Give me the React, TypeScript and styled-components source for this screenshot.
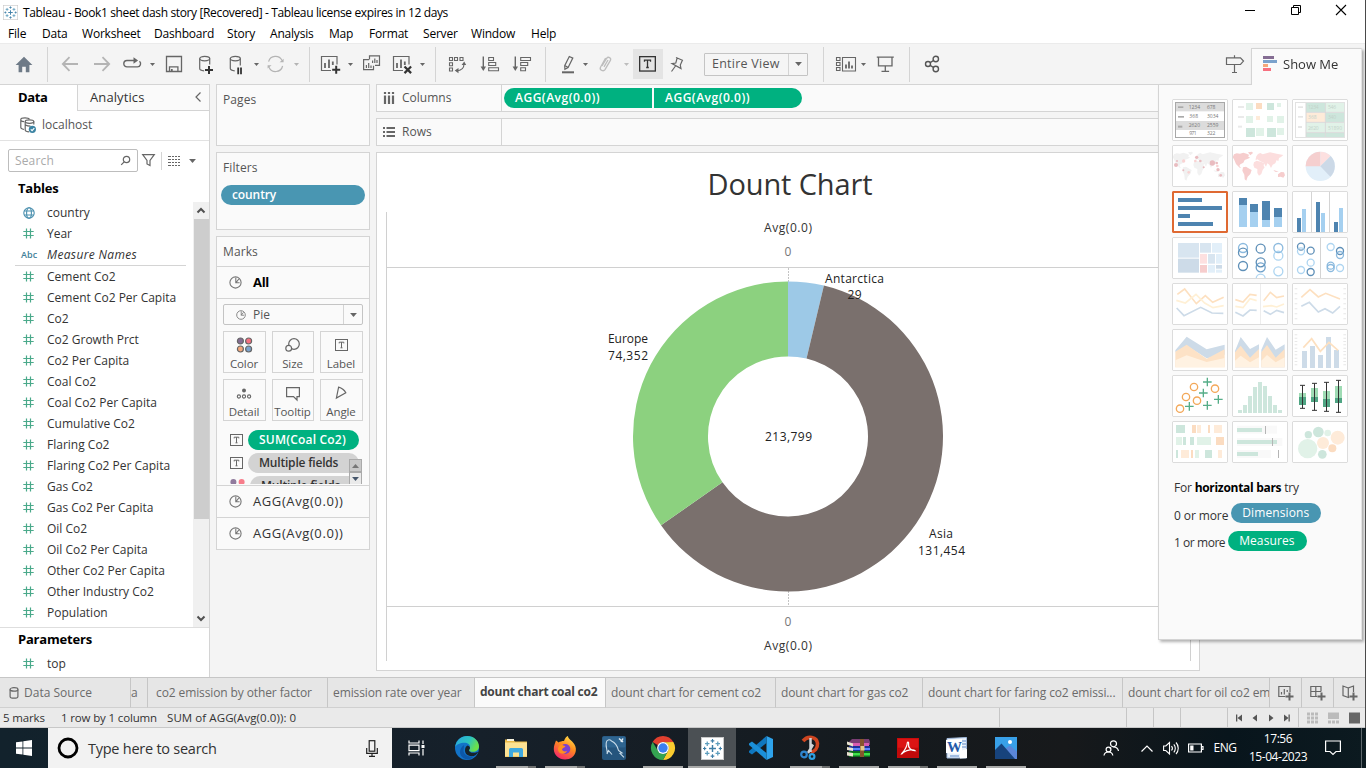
import React from "react";
import styled, { createGlobalStyle, css } from "styled-components";

const GREEN = "#00b180";
const BLUE = "#4996b2";
const LINE = "#d4d4d4";
const INK = "#666666";

const GlobalStyle = createGlobalStyle`
  * { box-sizing: border-box; }
  body { margin: 0; overflow: hidden; background: #f4f4f4; }
  svg { display: block; overflow: visible; flex: none; }
`;

const Screen = styled.div`
  position: relative;
  width: 1366px;
  height: 768px;
  display: flex;
  flex-direction: column;
  overflow: hidden;
  background: #f4f4f4;
  font-family: "Open Sans", "Noto Sans", sans-serif;
  font-size: 12px;
  color: #333;
  white-space: nowrap;
`;

const WindowEdge = styled.div`
  position: absolute;
  right: 0;
  top: 0;
  width: 1px;
  height: 728px;
  background: #4a4a4a;
`;

/* ---------- title and menu ---------- */

const TitleBar = styled.header`
  height: 24px;
  background: #fff;
  display: flex;
  align-items: center;
  padding: 0 16px 0 3px;
  color: #000;
`;
const TitleText = styled.span`
  margin-left: 5px;
  flex: 1;
  letter-spacing: -0.36px;
`;
const WindowButtons = styled.div`
  display: flex;
  width: 106px;
  padding-bottom: 4px;
  justify-content: space-between;
  align-items: center;
`;
const MenuBar = styled.nav`
  height: 19px;
  padding-left: 8px;
  background: #fff;
  display: flex;
  align-items: center;
  color: #000;
  letter-spacing: -0.2px;
`;
const MenuItem = styled.span<{ $w: number }>`
  flex: 0 0 ${(p) => p.$w}px;
`;

/* ---------- toolbar ---------- */

const Toolbar = styled.div`
  height: 41px;
  border-top: 1px solid #ebebeb;
  background: #f4f4f4;
  display: flex;
  align-items: center;
`;
const Slot = styled.div<{ $gap: number }>`
  margin-left: ${(p) => p.$gap}px;
  flex: none;
`;
const ToolSeparator = styled.div<{ $gap: number }>`
  margin-left: ${(p) => p.$gap}px;
  flex: none;
  width: 1px;
  height: 35px;
  background: ${LINE};
`;
const LabelToggle = styled.div`
  margin-left: 4px;
  width: 30px;
  height: 30px;
  background: #e4e4e4;
  display: flex;
  align-items: center;
  justify-content: center;
  padding-right: 1px;
`;
const FitSelect = styled.div`
  margin-left: 16px;
  width: 104px;
  height: 23px;
  border: 1px solid #c4c4c4;
  border-radius: 1px;
  background: #f5f5f5;
  display: flex;
  color: #555;
  font-size: 12.5px;
  line-height: 20px;
  padding-left: 7px;
  letter-spacing: 0.25px;
`;
const SelectArrow = styled.div<{ $w: number }>`
  margin-left: auto;
  width: ${(p) => p.$w}px;
  align-self: stretch;
  border-left: 1px solid ${LINE};
  display: flex;
  align-items: center;
  justify-content: center;
`;

/* ---------- body ---------- */

const Body = styled.main`
  height: 593px;
  display: flex;
`;
const DataPane = styled.aside`
  width: 210px;
  background: #fff;
  border-right: 1px solid ${LINE};
  border-top: 1px solid ${LINE};
  display: flex;
  flex-direction: column;
`;
const PaneTabs = styled.div`
  height: 26px;
  display: flex;
  font-size: 13px;
  line-height: 24px;
`;
const DataTab = styled.div`
  width: 77px;
  padding-left: 18px;
  font-weight: 700;
  color: #000;
  letter-spacing: -0.35px;
`;
const AnalyticsTab = styled.div`
  flex: 1;
  padding: 0 8px 2px 12px;
  display: flex;
  justify-content: space-between;
  align-items: center;
  background: #fafafa;
  border-left: 1px solid ${LINE};
  border-bottom: 1px solid ${LINE};
  letter-spacing: 0.1px;
`;
const SourceRow = styled.div`
  height: 30px;
  border-bottom: 1px solid #e2e2e2;
  padding: 0 0 2px 20px;
  display: flex;
  align-items: center;
  gap: 6px;
  color: #555;
`;
const SearchRow = styled.div`
  height: 39px;
  padding: 0 0 0 8px;
  display: flex;
  align-items: center;
`;
const SearchBox = styled.div`
  width: 130px;
  height: 23px;
  border: 1px solid #bdbdbd;
  border-radius: 2px;
  padding: 0 6px;
  display: flex;
  align-items: center;
  justify-content: space-between;
  color: #aaa;
  letter-spacing: 0.15px;
`;
const PaneHeading = styled.h3<{ $h: number; $line: number }>`
  margin: 0;
  height: ${(p) => p.$h}px;
  line-height: ${(p) => p.$line}px;
  padding-left: 18px;
  font-size: 13px;
  color: #000;
  letter-spacing: -0.2px;
`;
const FieldArea = styled.div`
  height: 426px;
  display: flex;
  border-bottom: 1px solid #dedede;
`;
const FieldList = styled.div`
  width: 193px;
`;
const FieldRow = styled.div<{ $italic?: boolean }>`
  height: 21px;
  display: flex;
  align-items: center;
  padding-left: 21px;
  ${(p) =>
    p.$italic &&
    css`
      font-style: italic;
      letter-spacing: 0.35px;
    `}
`;
const FieldIcon = styled.span`
  width: 24px;
  margin-left: 2px;
  flex: none;
`;
const AbcIcon = styled.span`
  width: 26px;
  flex: none;
  color: #3f7f99;
  font-size: 9px;
  font-weight: 600;
  font-style: normal;
  letter-spacing: 0.1px;
`;
const FieldRule = styled.div`
  height: 1px;
  margin: 0 7px 0 15px;
  background: ${LINE};
`;
const Scrollbar = styled.div`
  width: 16px;
  height: 425px;
  background: #f0f0f0;
  display: flex;
  flex-direction: column;
  align-items: center;
`;
const ScrollArrow = styled.div`
  height: 17px;
  display: flex;
  align-items: center;
`;
const ScrollThumb = styled.div`
  width: 15px;
  height: 300px;
  background: #cdcdcd;
  margin-bottom: auto;
`;

/* ---------- cards ---------- */

const CardColumn = styled.section`
  width: 154px;
  margin-left: 6px;
  display: flex;
  flex-direction: column;
  gap: 6px;
`;
const Card = styled.div<{ $h: number }>`
  height: ${(p) => p.$h}px;
  border: 1px solid ${LINE};
  background: #fafafa;
  color: #555;
`;
const CardTitle = styled.div`
  height: 29px;
  line-height: 30px;
  padding-left: 6px;
  letter-spacing: 0.1px;
`;
const Pill = styled.div<{ $w: number; $tone: string; $side?: "left" | "right"; $dark?: boolean; $ls?: number }>`
  width: ${(p) => p.$w}px;
  height: 20px;
  flex: none;
  line-height: 19px;
  padding-left: 11px;
  background: ${(p) => p.$tone};
  color: ${(p) => (p.$dark ? "#333" : "#fff")};
  font-weight: 600;
  font-size: 12px;
  letter-spacing: ${(p) => p.$ls ?? -0.15}px;
  border-radius: ${(p) => (p.$side === "left" ? "10px 0 0 10px" : p.$side === "right" ? "0 10px 10px 0" : "10px")};
`;
const FilterPill = styled(Pill)`
  margin: 3px 0 0 4px;
`;
const MarkLayer = styled.div<{ $bold?: boolean }>`
  height: 32px;
  border-top: 1px solid ${LINE};
  display: flex;
  align-items: center;
  padding: 0 0 1px 12px;
  gap: 11px;
  font-size: 13px;
  letter-spacing: ${(p) => (p.$bold ? -0.3 : 0.6)}px;
  color: ${(p) => (p.$bold ? "#000" : "#333")};
  font-weight: ${(p) => (p.$bold ? 700 : 400)};
`;
const MarkBody = styled.div`
  height: 187px;
  border-top: 1px solid ${LINE};
  padding: 5px 0 0 6px;
  overflow: hidden;
`;
const MarkSelect = styled.div`
  width: 140px;
  height: 21px;
  border: 1px solid #c4c4c4;
  border-radius: 2px;
  display: flex;
  align-items: center;
  padding-left: 12px;
  gap: 7px;
`;
const MarkGrid = styled.div`
  margin-top: 6px;
  width: 140px;
  display: grid;
  grid-template-columns: 43px 42px 43px;
  grid-auto-rows: 42px;
  gap: 6px;
`;
const MarkButton = styled.div`
  border: 1px solid ${LINE};
  display: flex;
  flex-direction: column;
  align-items: center;
  justify-content: space-between;
  padding: 3px 1px 0 0;
  font-size: 11.5px;
  line-height: 16px;
  letter-spacing: -0.1px;
`;
const MarkPills = styled.div`
  position: relative;
  margin-top: 9px;
  height: 54px;
  overflow: hidden;
  display: flex;
  flex-direction: column;
  gap: 3px;
`;
const MarkPillRow = styled.div`
  display: flex;
  align-items: center;
  padding-left: 7px;
  gap: 5px;
`;
const Stepper = styled.div`
  position: absolute;
  right: 7px;
  top: 29px;
  width: 13px;
  display: flex;
  flex-direction: column;
`;
const Step = styled.div<{ $off?: boolean }>`
  height: 13px;
  border: 1px solid #aaa;
  background: ${(p) => (p.$off ? "#c9c9c9" : "#eaeaea")};
  display: flex;
  align-items: center;
  justify-content: center;
`;

/* ---------- worksheet ---------- */

const Sheet = styled.section`
  width: 824px;
  margin-left: 6px;
  display: flex;
  flex-direction: column;
`;
const Shelf = styled.div`
  height: 28px;
  margin-bottom: 6px;
  border: 1px solid ${LINE};
  background: #fafafa;
  display: flex;
`;
const ShelfName = styled.div`
  width: 125px;
  border-right: 1px solid ${LINE};
  display: flex;
  align-items: center;
  gap: 7px;
  padding: 0 0 1px 6px;
  color: #555;
`;
const ShelfPills = styled.div`
  display: flex;
  gap: 2px;
  padding: 3px 0 0 2px;
`;
const Canvas = styled.div`
  height: 519px;
  border: 1px solid ${LINE};
  background: #fff;
`;

/* ---------- show me ---------- */

const ShowMe = styled.aside`
  position: absolute;
  left: 1158px;
  top: 48px;
  width: 204px;
  height: 592px;
  display: flex;
  flex-direction: column;
  filter: drop-shadow(2px 2px 1.5px rgba(0, 0, 0, 0.3));
`;
const ShowMeTab = styled.div`
  position: relative;
  z-index: 1;
  align-self: flex-end;
  width: 111px;
  height: 37px;
  margin-bottom: -1px;
  background: #fafafa;
  border: 1px solid ${LINE};
  border-bottom: 0;
  border-right-color: #e4e4e4;
  display: flex;
  align-items: center;
  gap: 6px;
  padding: 0 0 7px 11px;
  font-size: 13px;
`;
const ShowMePanel = styled.div`
  flex: 1;
  background: #fafafa;
  border: 1px solid ${LINE};
  border-right-color: #e4e4e4;
  padding: 14px 0 0 13px;
`;
const ThumbGrid = styled.div`
  display: grid;
  grid-template-columns: repeat(3, 56px);
  grid-auto-rows: 42px;
  gap: 4px;
`;
const Thumb = styled.div<{ $on?: boolean }>`
  position: relative;
  background: #fff;
  overflow: hidden;
  border-radius: 1px;
  &::after {
    content: "";
    position: absolute;
    inset: 0;
    border-radius: 1px;
    border: ${(p) => (p.$on ? "2px solid #df6932" : "1px solid #dcdcdc")};
  }
`;
const Hints = styled.div`
  margin-top: 11px;
`;
const Hint = styled.div<{ $ls?: number }>`
  display: flex;
  align-items: center;
  gap: 3px;
  height: 27.5px;
  padding-left: 2px;
  letter-spacing: ${(p) => p.$ls ?? -0.2}px;
  b { color: #000; letter-spacing: -0.3px; }
`;
const HintPill = styled(Pill)`
  margin-bottom: 4px;
  font-weight: 400;
  letter-spacing: 0.1px;
`;

/* ---------- sheet tabs and status ---------- */

const SheetTabs = styled.div`
  height: 31px;
  border-top: 1px solid #c6c6c6;
  background: #e6e6e6;
  display: flex;
  letter-spacing: -0.11px;
`;
const SheetTab = styled.div<{ $w: number; $pad?: number; $active?: boolean }>`
  flex: 0 0 ${(p) => p.$w}px;
  overflow: hidden;
  padding-left: ${(p) => p.$pad ?? 5}px;
  border-right: 1px solid #c6c6c6;
  border-bottom: 1px solid #d0d0d0;
  line-height: 30px;
  color: #6b6b6b;
  ${(p) =>
    p.$active &&
    css`
      background: #fafafa;
      color: #444;
      font-weight: 700;
      line-height: 27px;
      letter-spacing: -0.25px;
    `}
`;
const SourceTab = styled(SheetTab)`
  display: flex;
  align-items: center;
  gap: 5px;
  letter-spacing: 0;
`;
const AddTab = styled.div`
  width: 32px;
  flex: none;
  border-right: 1px solid #c6c6c6;
  border-bottom: 1px solid #d0d0d0;
  display: flex;
  align-items: center;
  justify-content: center;
`;
const StatusBar = styled.div`
  height: 20px;
  background: #eaeaea;
  border-bottom: 1px solid #c8c8c8;
  display: flex;
  align-items: center;
  font-size: 11.5px;
  padding-left: 3px;
`;
const StatusText = styled.span<{ $w: number; $ls?: number }>`
  flex: 0 0 ${(p) => p.$w}px;
  letter-spacing: ${(p) => p.$ls ?? -0.15}px;
`;
const StatusCell = styled.div<{ $w: number }>`
  flex: 0 0 ${(p) => p.$w}px;
  height: 20px;
  border-left: 1px solid #c6c6c6;
  display: flex;
  align-items: center;
`;

/* ---------- taskbar ---------- */

const Taskbar = styled.footer`
  height: 40px;
  display: flex;
  align-items: stretch;
  background: linear-gradient(90deg, #12222c 0%, #16202a 35%, #151a1e 65%, #17191b 78%, #08151c 90%, #0c1a20 100%);
  color: #fff;
`;
const StartButton = styled.div`
  width: 48px;
  display: flex;
  align-items: center;
  justify-content: center;
`;
const TaskSearch = styled.div`
  width: 344px;
  background: #f2f2f2;
  display: flex;
  align-items: center;
  padding: 0 14px 0 9px;
  color: #333;
  font-size: 14.5px;
  letter-spacing: -0.25px;
`;
const TaskSearchText = styled.span`
  margin-left: 9px;
  flex: 1;
`;
const TaskItems = styled.div`
  display: flex;
  margin-left: 2px;
`;
const TaskItem = styled.div<{ $state?: "open" | "multi" | "active" }>`
  position: relative;
  width: 48px;
  margin-right: 1px;
  display: flex;
  align-items: center;
  justify-content: center;
  background: ${(p) => (p.$state === "active" ? "#4b5054" : "transparent")};
  ${(p) =>
    p.$state &&
    css`
      &::after {
        content: "";
        position: absolute;
        bottom: 0;
        height: 2px;
        left: ${p.$state === "active" ? 0 : 4}px;
        right: ${p.$state === "active" ? 0 : 4}px;
        background: ${p.$state === "multi" ? "linear-gradient(90deg, #a9aaa9 32px, #6e7070 32px)" : "#a9aaa9"};
      }
    `}
`;
const Tray = styled.div`
  margin-left: auto;
  width: 263px;
  display: flex;
  align-items: center;
`;
const TrayText = styled.div<{ $gap: number; $w: number }>`
  margin-left: ${(p) => p.$gap}px;
  flex: 0 0 ${(p) => p.$w}px;
  font-size: 12px;
  line-height: 18px;
  letter-spacing: -0.45px;
  text-align: center;
`;
const DesktopPeek = styled.div`
  margin-left: auto;
  width: 5px;
  align-self: stretch;
  border-left: 1px solid #5d666b;
`;

/* ---------- icons ---------- */

type IconProps = { w?: number; h?: number; color?: string; sw?: number; children: React.ReactNode };
const Icon = ({ w = 20, h = 20, color = INK, sw = 1.2, children }: IconProps) => (
  <svg width={w} height={h} viewBox={`0 0 ${w} ${h}`} fill="none" stroke={color} strokeWidth={sw}>
    {children}
  </svg>
);
const Caret = ({ color = INK, w = 6 }: { color?: string; w?: number }) => (
  <svg width={w} height={w / 2 + 0.5} viewBox="0 0 6 3.5">
    <path d="M0 0h6l-3 3.5z" fill={color} />
  </svg>
);
const CaretSlot = ({ gap, color }: { gap: number; color?: string }) => (
  <Slot $gap={gap}>
    <Caret color={color} w={5} />
  </Slot>
);
const TableauMark = ({ size }: { size: number }) => {
  const plus = (x: number, y: number, r: number, c: string, w: number) => (
    <path d={`M${x - r} ${y}h${r * 2}M${x} ${y - r}v${r * 2}`} stroke={c} strokeWidth={w} />
  );
  return (
    <svg width={size} height={size} viewBox="0 0 24 24" fill="none">
      <rect x="0.5" y="0.5" width="23" height="23" fill="#fff" stroke="#c9c9c9" />
      {plus(12, 12, 3.6, "#3e7ea6", 1.5)}
      {plus(6.5, 7, 2.3, "#5c9dbd", 1.3)}
      {plus(17.5, 7, 2.3, "#5c9dbd", 1.3)}
      {plus(6.5, 17, 2.3, "#5c9dbd", 1.3)}
      {plus(17.5, 17, 2.3, "#5c9dbd", 1.3)}
      {plus(12, 4, 1.9, "#3e7ea6", 1.2)}
      {plus(12, 20, 1.9, "#3e7ea6", 1.2)}
      {plus(3.8, 12, 1.7, "#3e7ea6", 1.2)}
      {plus(20.2, 12, 1.7, "#3e7ea6", 1.2)}
    </svg>
  );
};
const PieGlyph = ({ size = 13 }: { size?: number }) => (
  <svg width={size} height={size} viewBox="0 0 13 13" fill="none" stroke="#777" strokeWidth="1.1">
    <circle cx="6.5" cy="6.5" r="5.6" />
    <path d="M6.8 1.8v5h3.8M6.800 6.800l3-3.800" />
  </svg>
);
const BoxedT = ({ w = 13, h = 12, color = INK }: { w?: number; h?: number; color?: string }) => (
  <svg width={w} height={h} viewBox="0 0 13 12" fill="none" stroke={color} strokeWidth="1">
    <rect x="0.5" y="0.5" width="12" height="11" />
    <path d="M4.2 4.4V3.2h4.6v1.2M6.5 3.2v5.6M5.5 8.8h2" />
  </svg>
);
const HashGlyph = () => (
  <Icon w={11} h={11} color="#4aa98a">
    <path d="M3.5 0.5v10M7.5 0.5v10M0.3 3.5h10.4M0.3 7.5h10.4" />
  </Icon>
);
const GlobeGlyph = () => (
  <Icon w={12} h={12} color="#4a8fae" sw={1.1}>
    <circle cx="6" cy="6" r="5.2" />
    <ellipse cx="6" cy="6" rx="2.4" ry="5.2" />
    <path d="M1.2 4h9.6M1.2 8h9.6" />
  </Icon>
);
const ColorDots = ({ dim }: { dim?: boolean }) => (
  <svg width="15" height="14" viewBox="0 0 15 14" opacity={dim ? 0.9 : 1}>
    <circle cx="3.4" cy="3" r="3" fill="#856d93" />
    <circle cx="11.6" cy="3" r="3" fill="#f7707f" />
    <circle cx="3.4" cy="11" r="3" fill="#f4a77a" />
    <circle cx="11.6" cy="11" r="3" fill="#7ba2cc" />
  </svg>
);
const ChartSheet = ({ kind }: { kind: "plus" | "x" }) => (
  <Icon>
    <path d="M17 10.5V2.5h-15.5v14h9.5" />
    <path d="M5 14V9M9 14V5.5M12.8 11V7.5" strokeWidth="1.8" />
    {kind === "plus" ? (
      <path d="M12.2 15.8h8M16.2 11.8v8" stroke="#333" strokeWidth="2" />
    ) : (
      <path d="M12.5 12.5l6.6 6.6M19.1 12.5l-6.6 6.6" stroke="#333" strokeWidth="2.2" />
    )}
  </Icon>
);

const ToolbarIcons = () => (
  <>
    <Slot $gap={14}>
      <svg width="20" height="20" viewBox="0 0 20 20">
        <path d="M10 2.8L1.6 11h3v7.2h3.6v-5.4h3.6v5.4h3.6V11h3z" fill="#6e7a87" />
      </svg>
    </Slot>
    <ToolSeparator $gap={13} />
    <Slot $gap={12}>
      <Icon color="#b4b4b4" sw={1.8}><path d="M18 10H3M9.5 3.2L2.8 10l6.7 6.8" /></Icon>
    </Slot>
    <Slot $gap={12}>
      <Icon color="#b4b4b4" sw={1.8}><path d="M2 10h15M10.5 3.2l6.7 6.8-6.7 6.8" /></Icon>
    </Slot>
    <Slot $gap={10}>
      <Icon sw={1.4}>
        <path d="M14 6.5H5a3.2 3.2 0 0 0 0 6.4h10.5a3.2 3.2 0 0 0 2-5.6" />
        <path d="M11.5 3.3l4.6 3.2-4.6 3.2z" fill={INK} stroke="none" />
      </Icon>
    </Slot>
    <CaretSlot gap={8} />
    <Slot $gap={9}>
      <Icon sw={1.3}>
        <path d="M2.5 2.5h15v15h-15z" />
        <path d="M5.5 17.5v-4.6h8.4v4.6" />
        <path d="M7.8 15v2.6" strokeWidth="1.8" />
      </Icon>
    </Slot>
    <Slot $gap={12}>
      <Icon>
        <ellipse cx="8.7" cy="4.6" rx="5" ry="2.2" />
        <path d="M3.7 4.6v10c0 1.2 2 2.1 4.4 2.2M13.7 4.6v6" />
        <path d="M9 16h8M13 12v8" stroke="#333" strokeWidth="2" />
      </Icon>
    </Slot>
    <Slot $gap={12}>
      <Icon>
        <ellipse cx="7.3" cy="4.6" rx="5" ry="2.2" />
        <path d="M2.3 4.6v10c0 1.2 2 2 4.4 2.2M12.3 4.6v7" />
        <path d="M10.2 13.5v6.7M13 13.5v6.7" stroke="#333" strokeWidth="1.8" />
      </Icon>
    </Slot>
    <CaretSlot gap={6} />
    <Slot $gap={7}>
      <Icon color="#b4b4b4">
        <path d="M2.6 7.6A7.2 7.2 0 0 1 16 6.5M16.6 12A7.2 7.2 0 0 1 3 13.2" />
        <path d="M17.6 4.8v3.4h-4zM1.6 14.6v-3.4h4z" fill="#b4b4b4" stroke="none" />
      </Icon>
    </Slot>
    <CaretSlot gap={8} color="#b4b4b4" />
    <ToolSeparator $gap={10} />
    <Slot $gap={10}><ChartSheet kind="plus" /></Slot>
    <CaretSlot gap={8} />
    <Slot $gap={9}>
      <Icon>
        <path d="M7.5 5.5v-3.6h10v9.4h-4.5" />
        <path d="M7 5.7H1.6v10h9.9v-4" />
        <path d="M4.4 14v-3M6.7 14V9M9 14v-2.5M10.6 9V6.5M12.8 9V4.5M15 9V6" />
      </Icon>
    </Slot>
    <Slot $gap={10}><ChartSheet kind="x" /></Slot>
    <CaretSlot gap={8} />
    <ToolSeparator $gap={10} />
    <Slot $gap={12}>
      <Icon sw={1.1}>
        <path d="M1.5 3.5h3v3h-3zM6.5 3.5h3v3h-3zM12 3.5h3v3h-3zM1.5 8.8h3v3h-3zM1.5 14h3v3h-3z" />
        <path d="M16 10c0 4-3 6.5-7.5 6.7" />
        <path d="M13.600 11l2.600-3.400 2 3.400zM10.500 14l-3.800 2.600 3.800 2.600z" fill={INK} stroke="none" />
      </Icon>
    </Slot>
    <Slot $gap={12}>
      <Icon sw={1.1}>
        <path d="M3.3 2.5v12" strokeWidth="1.4" />
        <path d="M.6 12.500h5.400l-2.700 4.500z" fill={INK} stroke="none" />
        <path d="M8.700 3.500h4.800v3H8.700zM8.700 8.500h7v3h-7zM8.700 13.700h9.800v3H8.700z" />
      </Icon>
    </Slot>
    <Slot $gap={12}>
      <Icon sw={1.1}>
        <path d="M3.3 2.5v12" strokeWidth="1.4" />
        <path d="M.6 12.500h5.400l-2.700 4.500z" fill={INK} stroke="none" />
        <path d="M8.700 3.500h9.800v3H8.700zM8.700 8.500h7v3h-7zM8.700 13.700h4.800v3H8.700z" />
      </Icon>
    </Slot>
    <ToolSeparator $gap={13} />
    <Slot $gap={14}>
      <Icon>
        <path d="M9.300 2.500l3.500 1.600-4.700 9.400-3.200 1.700-.2-3.500zM4.800 11.500l3.400 1.900" />
        <path d="M2 18.300h12" strokeWidth="2" />
      </Icon>
    </Slot>
    <CaretSlot gap={3} />
    <Slot $gap={8}>
      <Icon color="#bdbdbd" sw={1.3}>
        <path d="M6 12l4.600-7.600c1.600-2.300 5-.6 3.800 2L9 15.600c-1.500 2.300-5.800.6-4.500-2.400L9.600 4M8 12.800l4-6.800" />
      </Icon>
    </Slot>
    <CaretSlot gap={8} color="#bdbdbd" />
    <LabelToggle><BoxedT w={17} h={15.7} color="#333" /></LabelToggle>
    <Slot $gap={5}>
      <Icon>
        <path d="M8 3.500l7 3M9 4.500L7.800 9 4 9.600l9 5-.7-3.600 2-4.500M7.500 12L3.500 17.500" />
      </Icon>
    </Slot>
    <FitSelect>
      Entire View
      <SelectArrow $w={19}><Caret w={7} /></SelectArrow>
    </FitSelect>
    <ToolSeparator $gap={15} />
    <Slot $gap={12}>
      <Icon sw={1.1}>
        <path d="M.5 3.500h3.500v3H.5zM.5 8.500h3.500v3H.5zM.5 13.500h3.500v3H.5zM6.500 3.500h13v13.500h-13z" />
        <path d="M10 14.500v-4M13 14.500V7.500M16 14.500v-3" strokeWidth="1.8" />
      </Icon>
    </Slot>
    <CaretSlot gap={5} />
    <Slot $gap={9}>
      <Icon sw={1.3}>
        <path d="M1.800 3.200h17M3.500 3.200v8.600h13.500V3.200M10.300 12v5M6.500 17.300h7.600" />
      </Icon>
    </Slot>
    <ToolSeparator $gap={14} />
    <Slot $gap={12}>
      <Icon sw={1.4} color="#555">
        <circle cx="6" cy="10" r="2.5" /><circle cx="13.8" cy="5" r="2.7" /><circle cx="13.8" cy="15" r="2.7" />
        <path d="M8.200 8.700l3.300-2.200M8.200 11.300l3.300 2.200" />
      </Icon>
    </Slot>
    <Slot $gap={283}>
      <Icon>
        <path d="M1.500 3.800h14l3 3.300-3 3.400h-14zM9.500 1.200v2.600M9.500 10.500v8M7 18.500h5" />
      </Icon>
    </Slot>
  </>
);

/* ---------- chart ---------- */

const CX = 411;
const CY = 283.4;
const wedge = (from: number, to: number) => {
  const p = (r: number, deg: number) => {
    const a = (deg * Math.PI) / 180;
    return `${(CX + r * Math.sin(a)).toFixed(2)} ${(CY - r * Math.cos(a)).toFixed(2)}`;
  };
  const big = to - from > 180 ? 1 : 0;
  return `M${p(155, from)}A155 155 0 ${big} 1 ${p(155, to)}L${p(80, to)}A80 80 0 ${big} 0 ${p(80, from)}Z`;
};
const ChartText = styled.text<{ $tone?: string; $weight?: number }>`
  font-size: 12px;
  text-anchor: middle;
  fill: ${(p) => p.$tone ?? "#222"};
  font-weight: ${(p) => p.$weight ?? 400};
`;
const ChartTitle = styled.text`
  font-size: 29px;
  text-anchor: middle;
  fill: #333;
`;
const Chart = () => (
  <svg width="822" height="517" viewBox="0 0 822 517">
    <path d="M9.500 59V508M813.500 59V508M10 114.500H813M10 453.500H813" stroke="#d0d0d0" />
    <path d="M411.500 115V129M411.500 438V453" stroke="#c4c4c4" strokeDasharray="2 1" />
    <path d={wedge(0, 13.4)} fill="#9dc9e7" />
    <path d={wedge(13.4, 235)} fill="#7a706d" />
    <path d={wedge(235, 360)} fill="#8cd17f" />
    <ChartTitle x="413" y="42" textLength="165">Dount Chart</ChartTitle>
    <ChartText x="411" y="79" textLength="48" $weight={500} $tone="#333">Avg(0.0)</ChartText>
    <ChartText x="411" y="103" $tone="#777">0</ChartText>
    <ChartText x="411" y="473" $tone="#777">0</ChartText>
    <ChartText x="411" y="497" textLength="48" $weight={500} $tone="#333">Avg(0.0)</ChartText>
    <ChartText x="477.5" y="129.500" textLength="59">Antarctica</ChartText>
    <ChartText x="477.5" y="146" textLength="14">29</ChartText>
    <ChartText x="251" y="190" textLength="40">Europe</ChartText>
    <ChartText x="251" y="207" textLength="40">74,352</ChartText>
    <ChartText x="411.500" y="288" textLength="47">213,799</ChartText>
    <ChartText x="564" y="385" textLength="24">Asia</ChartText>
    <ChartText x="564.500" y="402" textLength="47">131,454</ChartText>
  </svg>
);

/* ---------- show me thumbnails, drawn on a 168 x 126 grid ---------- */

type Block = [number, number, number, number, string];
const Blocks = ({ items }: { items: Block[] }) => (
  <>
    {items.map(([x, y, w, h, c], i) => (
      <rect key={i} x={x} y={y} width={w} height={h} fill={c} />
    ))}
  </>
);
type Ring = [number, number, string];
const Rings = ({ items, r }: { items: Ring[]; r: number }) => (
  <>
    {items.map(([x, y, c], i) => (
      <circle key={i} cx={x} cy={y} r={r} fill="none" stroke={c} strokeWidth="4" opacity="0.9" />
    ))}
  </>
);
const Cell = styled.text`
  font-size: 15px;
`;
const Lines = ({ items }: { items: [string, string][] }) => (
  <>
    {items.map(([points, c], i) => (
      <polyline key={i} points={points} fill="none" stroke={c} strokeWidth="5" />
    ))}
  </>
);
type Dot = [number, number, number, string];
const Dots = ({ items }: { items: Dot[] }) => (
  <>
    {items.map(([x, y, r, c], i) => (
      <circle key={i} cx={x} cy={y} r={r} fill={c} />
    ))}
  </>
);

const mint = "#cde6dc";
const paleMint = "#e1f2e8";
const peach = "#fbdcc1";
const palePeach = "#feebd9";
const deep = "#4e84b0";
const sky = "#a5d0f0";
const midBlue = "#7fb2da";
const mist = "#cddbe8";
const orangeLine = "#fde0c0";
const cream = "#fff0d5";
const rose = "#e9bcc0";
const paleRose = "#f9d3d3";

const World = ({ a, b }: { a: string; b: string }) => (
  <>
    <path d="M6 28l8-3 10 1 10-3 10 3 8 4-4 4 6 4-8 4-8 3-4 8-9 5-3 5 5 6-4-1-11-11-6-14-4-6zM48 22l12-2 3 4-8 7z" fill={a} />
    <path d="M33 67l9-2 10 6 7 4-4 12-8 8-4 12-5-4-1-14-6-12z" fill={a} />
    <path d="M66 52l8-5 12 3 10 4-1 9 3 4-6 8-4 12-7 5-5-8 0-12-9-4-3-8z" fill={b} />
    <path d="M71 42l2-8 5-7 7-3 7 4 22-6 20 4 20 4-7 6-6 3-2 10-5-4-4 10-8 4-5 10-5-10-6-4-4 10-7-12-10-4-9-6-5 3z" fill={b} />
    <path d="M138 88l9-7 9 1 3 9-5 7-8-3-8 1zM124 75l10 3 6 3-11-1z" fill={a} />
  </>
);

const thumbs: React.ReactNode[] = [
  <>
    <Blocks items={[[10, 10, 148, 27, "#dcdcdc"], [10, 66, 148, 27, "#dcdcdc"], [18, 22, 16, 5, "#aaa"], [18, 51, 18, 5, "#aaa"], [18, 80, 13, 6, "#aaa"]]} />
    <rect x="10.5" y="10.5" width="147" height="105" fill="none" stroke="#a8a8a8" strokeWidth="3" />
    <g fill="#777">
      <Cell x="50" y="31" textLength="34">1234</Cell><Cell x="105" y="31" textLength="25">678</Cell>
      <Cell x="52" y="58" textLength="26">368</Cell><Cell x="105" y="58" textLength="34">3034</Cell>
      <Cell x="50" y="85" textLength="34">2620</Cell><Cell x="105" y="85" textLength="34">2559</Cell>
      <Cell x="52" y="109" textLength="22">971</Cell><Cell x="105" y="109" textLength="25">322</Cell>
    </g>
  </>,
  <Blocks items={[
    [18, 21, 18, 6, "#eaeaea"], [18, 51, 18, 6, "#eaeaea"], [18, 80, 12, 6, "#eaeaea"],
    [42, 12, 21, 21, paleMint], [72, 12, 18, 18, peach], [105, 12, 21, 21, mint], [135, 12, 12, 12, paleMint],
    [42, 51, 21, 21, paleMint], [72, 51, 12, 12, palePeach], [105, 51, 18, 18, paleMint], [135, 51, 21, 21, paleMint],
    [42, 87, 27, 27, mint], [72, 87, 24, 24, paleMint], [105, 87, 27, 27, mint], [135, 87, 21, 21, paleMint],
  ]} />,
  <>
    <Blocks items={[
      [42, 10, 58, 29, mint], [101, 10, 56, 29, paleMint], [42, 42, 58, 27, palePeach], [101, 42, 56, 27, mint],
      [42, 72, 58, 27, paleMint], [101, 72, 56, 27, paleMint], [42, 102, 58, 13, mint], [101, 102, 56, 13, mint],
      [18, 22, 15, 5, "#e6e6e6"], [18, 51, 15, 5, "#e6e6e6"], [18, 81, 12, 6, "#e6e6e6"],
    ]} />
    <path d="M42 10v105M100 10v105M42 40h115M42 70h115M42 101h115" stroke="#d8d8d8" strokeWidth="3" />
    <rect x="10.5" y="10.5" width="147" height="105" fill="none" stroke="#e2e2e2" strokeWidth="3" />
    <g fill="#c3d3ca">
      <Cell x="48" y="30" textLength="32">1234</Cell><Cell x="108" y="30" textLength="24">546</Cell>
      <Cell x="48" y="61" textLength="26">368</Cell><Cell x="108" y="61" textLength="24">340</Cell>
      <Cell x="48" y="92" textLength="32">2620</Cell><Cell x="108" y="92" textLength="42">51890</Cell>
    </g>
  </>,
  <>
    <World a="#f1f1f1" b="#f2f2f2" />
    <Dots items={[
      [12, 60, 6, rose], [15, 48, 3, rose], [34, 76, 3, rose], [35, 48, 5, paleRose], [50, 82, 4, paleRose], [74, 37, 5, rose],
      [70, 48, 4, paleRose], [85, 48, 4, rose], [95, 67, 3, rose], [121, 54, 8, rose], [134, 54, 4, rose], [138, 74, 5, rose],
      [136, 63, 4, paleRose], [146, 91, 4, rose],
    ]} />
  </>,
  <World a="#f6cdcd" b="#fcdede" />,
  <>
    <circle cx="85" cy="64" r="44" fill="#e2eff9" />
    <path d="M85 64H41a44 44 0 0 1 44-44z" fill="#f5cfcf" />
    <path d="M85 64V20a44 44 0 0 1 31 13z" fill="#fde0e0" />
    <path d="M85 64l31-31a44 44 0 0 1-1 62z" fill="#ccd9e7" />
  </>,
  <Blocks items={[[18, 21, 72, 12, deep], [18, 45, 132, 12, deep], [18, 69, 36, 12, deep], [18, 93, 105, 12, deep]]} />,
  <Blocks items={[
    [21, 42, 24, 66, sky], [21, 21, 24, 21, deep], [54, 63, 24, 45, sky], [54, 39, 24, 24, deep],
    [90, 87, 24, 21, sky], [90, 30, 24, 57, deep], [126, 78, 24, 30, sky], [126, 51, 24, 27, deep],
  ]} />,
  <Blocks items={[
    [57, 3, 3, 120, LINE], [111, 3, 3, 120, LINE], [15, 81, 12, 42, deep], [30, 54, 12, 69, sky],
    [72, 33, 12, 90, deep], [87, 66, 12, 57, sky], [126, 93, 12, 30, deep], [141, 51, 12, 72, sky],
  ]} />,
  <Blocks items={[
    [18, 18, 63, 44, "#d8e5f0"], [18, 65, 63, 42, mist], [84, 18, 33, 29, "#d8e5f0"], [120, 18, 30, 29, "#e2eff9"],
    [84, 51, 21, 29, "#fde0e0"], [84, 84, 21, 23, "#f6cdcd"], [108, 51, 21, 29, "#d8e5f0"], [132, 51, 18, 29, "#e2eff9"],
    [108, 84, 21, 23, "#e2eff9"], [132, 84, 18, 11, mist], [132, 98, 18, 9, "#e2eff9"],
  ]} />,
  <Rings r={13.5} items={[
    [33, 33, midBlue], [33, 47, deep], [33, 87, deep], [86, 35, deep], [86, 76, deep], [86, 91, "#5f97c4"], [86, 125, sky],
    [139, 33, midBlue], [139, 56, sky], [139, 103, sky],
  ]} />,
  <>
    <rect x="84" y="3" width="3" height="120" fill={LINE} />
    <Rings r={10.5} items={[
      [27, 29, deep], [27, 43, sky], [27, 99, sky], [56, 41, deep], [56, 77, sky], [56, 105, deep],
      [116, 30, sky], [116, 86, midBlue], [116, 93, midBlue], [144, 42, deep], [144, 54, midBlue], [144, 93, sky],
    ]} />
  </>,
  <Lines items={[["16,34 38,18 73,62 100,38 122,58 155,43", orangeLine], ["13,52 40,60 72,34 98,60 123,74 155,68", cream], ["14,75 36,98 86,73 120,90 154,91", mist]]} />,
  <>
    <rect x="84" y="3" width="2" height="120" fill="#e4e4e4" />
    <Lines items={[
      ["10,50 33,57 54,34 74,37", orangeLine], ["10,70 33,74 54,47 74,53", cream], ["10,88 33,99 54,81 74,82", mist],
      ["95,53 115,28 134,44 156,39", orangeLine], ["93,71 118,68 134,72 156,63", cream], ["95,83 115,94 134,82 156,89", mist],
    ]} />
  </>,
  <>
    <path d="M12 16v96M158 16v96" stroke="#e8e8e8" strokeWidth="8" strokeDasharray="3 12" />
    <Lines items={[["28,43 54,20 79,42 101,31 144,48", orangeLine], ["28,70 52,58 79,87 99,77 122,90 144,70", mist]]} />
  </>,
  <>
    <path d="M10 64L44 23l60 38 54-14v30L104 88 44 50 10 70z" fill={mist} />
    <path d="M10 68L44 47l60 42 54-28v54H10z" fill="#fde2c6" />
    <path d="M10 94L44 79l60 20 54-12v28H10z" fill="#fff2e2" />
  </>,
  <>
    <path d="M9 66L26 24l28 36 27-14v69H9zM88 62l17-38 26 38 27-16v69H88z" fill={mist} />
    <path d="M9 70L26 50l28 36 27-26v55H9zM88 70l17-22 26 38 27-26v55H88z" fill="#fde2c6" />
    <path d="M9 95L26 80l28 20 27-15v30H9zM88 95l17-17 26 22 27-15v30H88z" fill="#fff2e2" />
  </>,
  <>
    <path d="M12 16v100M158 16v100" stroke="#e8e8e8" strokeWidth="8" strokeDasharray="3 7" />
    <Blocks items={[[30, 66, 15, 51, mist], [54, 51, 15, 66, mist], [78, 78, 15, 39, mist], [102, 24, 15, 93, mist], [126, 63, 15, 54, mist]]} />
    <Lines items={[["34,56 59,29 85,67 111,40 138,64", orangeLine]]} />
  </>,
  <>
    <g fill="none" stroke="#f3a859" strokeWidth="4">
      <circle cx="24" cy="101" r="11" /><circle cx="42" cy="66" r="11" /><circle cx="66" cy="36" r="11" />
      <circle cx="75" cy="77" r="11" /><circle cx="129" cy="41" r="11" />
    </g>
    <path
      d="M93 21h26M106 8v26M81 54h26M94 41v26M39 94h26M52 81v26M93 91h26M106 78v26M126 73h26M139 60v26"
      stroke="#55ad88"
      strokeWidth="4"
    />
  </>,
  <Blocks items={[9, 24, 51, 78, 93, 81, 51, 24, 9].map((h, i): Block => [18 + i * 15, 114 - h, 12, h, mint])} />,
  <>
    <Blocks items={[
      [21, 54, 21, 12, "#9fdbb4"], [21, 66, 21, 24, "#4fa583"], [57, 39, 21, 27, "#9fdbb4"], [57, 66, 21, 15, "#4fa583"],
      [93, 48, 21, 24, "#9fdbb4"], [93, 72, 21, 24, "#4fa583"], [129, 33, 21, 36, "#9fdbb4"], [129, 69, 21, 15, "#4fa583"],
    ]} />
    <path d="M31.500 31v69M24 31h15M24 100h15M67.500 25v81M60 25h15M60 106h15M103.500 22v87M96 22h15M96 109h15M139.500 16v96M132 16h15M132 112h15" stroke="#333" strokeWidth="3" />
  </>,
  <Blocks items={[
    [12, 12, 27, 24, mint], [60, 12, 12, 24, peach], [75, 12, 12, 24, palePeach], [108, 12, 6, 24, peach], [126, 12, 24, 24, palePeach],
    [12, 48, 18, 24, paleMint], [33, 48, 9, 24, mint], [54, 48, 12, 24, mint], [75, 48, 42, 24, paleMint], [132, 48, 24, 24, peach],
    [12, 87, 6, 24, mint], [27, 87, 24, 24, palePeach], [57, 87, 6, 24, peach], [69, 87, 12, 24, paleMint], [99, 87, 21, 24, mint], [138, 87, 12, 24, palePeach],
  ]} />,
  <Blocks items={[
    [15, 14, 120, 24, "#f9f9f9"], [15, 51, 136, 24, "#f9f9f9"], [15, 87, 102, 24, "#f9f9f9"],
    [15, 21, 75, 12, mint], [15, 57, 120, 12, mint], [15, 93, 63, 12, mint],
    [99, 15, 3, 24, "#b5b5b5"], [120, 51, 3, 24, "#b5b5b5"], [138, 87, 3, 24, "#b5b5b5"],
  ]} />,
  <Dots items={[
    [47, 83, 29, paleMint], [49, 41, 11, mint], [79, 33, 16, mint], [107, 36, 10, paleMint],
    [93, 66, 18, palePeach], [137, 50, 21, palePeach], [121, 82, 12, peach], [91, 100, 13, mint],
  ]} />,
];

/* ---------- taskbar icons ---------- */

const EdgeIcon = () => (
  <svg width="24" height="24" viewBox="0 0 24 24">
    <defs>
      <linearGradient id="edgeTop" x1="0" y1="0" x2="1" y2="0.4">
        <stop offset="0" stopColor="#2aa6e0" /><stop offset="0.6" stopColor="#2cc3c0" /><stop offset="1" stopColor="#6be04a" />
      </linearGradient>
    </defs>
    <circle cx="12" cy="12" r="12" fill="#1273c8" />
    <path d="M.2 11C1 4.500 6 0 12.200 0 19 0 24 5 24 10.500c0 3.500-3 5.300-6 5.300-2.500 0-4-.8-4-1.800 0-.8 1-1.200 1-3 0-2.300-2.200-4.200-5.500-4.200C5 6.800 1.500 8.500.2 11z" fill="url(#edgeTop)" />
    <path d="M10 14.500c0-2.500 1-4.300 2.500-5 1.700.5 2.500 1.500 2.500 2.400 0 1.300-1 1.500-1 2.500s1.500 2.400 4.500 2.400c2 0 3.500-.6 4.700-1-.6 1.300-1.500 2.400-2.500 3.200-3.500 2.500-10.700 1-10.700-4.500z" fill="#16232b" />
    <path d="M8.500 14.500c0 4.500 5.500 7.300 10.700 5.500-2 2.800-7 4.800-10.500 2.300-3-1.500-4-4.500-3.600-7.200.3-2.500 1.700-4.700 4-6.200z" fill="#0c57a8" />
  </svg>
);
const FolderIcon = () => (
  <svg width="22" height="20" viewBox="0 0 22 20">
    <path d="M0 1.500h8l2 2h12V19H0z" fill="#e9b949" />
    <path d="M0 4.500h22V18.500H0z" fill="#fde293" />
    <path d="M2 1h7v2H2z" fill="#f7f3df" />
    <path d="M4 19v-7.500q0-1.500 1.500-1.500h11q1.500 0 1.500 1.500V19h-4v-4.500H8V19z" fill="#3fa9e0" />
  </svg>
);
const FirefoxIcon = () => (
  <svg width="24" height="24" viewBox="0 0 24 24">
    <defs>
      <linearGradient id="foxBody" x1="0.8" y1="0" x2="0.3" y2="1">
        <stop offset="0" stopColor="#ffe14a" /><stop offset="0.45" stopColor="#ff8a1f" /><stop offset="1" stopColor="#f5246c" />
      </linearGradient>
    </defs>
    <path d="M3 4.500C4 5 5 6 5.500 6.500 7 5.500 9 5 11 5c1-3 2.500-4.500 4-5 0 2.500 3 4 5 6.500 2 2.300 3.300 5 2.800 8.500C22 20 17.500 23.500 12 23.500 6 23.500.800 19 .8 13c0-3 1-5.500 2.200-8.500z" fill="url(#foxBody)" />
    <circle cx="12.3" cy="13" r="5" fill="#7b3fd0" />
    <path d="M6.500 9.500c2-1 4 0 6 .8-1 1.700-3 1.500-3.500 3 .4 2 3 2.700 5 1.500-1 3-5 4-8 1.500-1.500-2-1.300-5 .5-6.800z" fill="#ff8f20" />
  </svg>
);
const MysqlIcon = () => (
  <svg width="24" height="24" viewBox="0 0 24 24">
    <rect width="24" height="24" rx="2" fill="#25557d" />
    <rect x="0.5" y="0.5" width="23" height="11" rx="1.5" fill="#2f6590" />
    <path d="M5 18c1-3-1.500-7-.8-11C4.500 3.500 7.500 3 9.500 5c3.500 1.500 6 5 7 9.500l3.500 2.500-2 .3 4 4M5 18l1.500-3.500 3.500 4" fill="none" stroke="#c8dbe8" strokeWidth="1.1" />
    <path d="M17 2.500l4 3.500M21 2.500l-2 3.500" stroke="#e6f0f6" strokeWidth="1.5" />
  </svg>
);
const ChromeIcon = () => (
  <svg width="24" height="24" viewBox="0 0 24 24">
    <path d="M1.600 6A12 12 0 0 1 22.400 6L12 6.300a5.700 5.700 0 0 0-5 3z" fill="#e0402f" />
    <path d="M22.400 6A12 12 0 0 1 12 24l5-9.100a5.700 5.700 0 0 0-5-8.600z" fill="#fbcc2f" />
    <path d="M1.600 6A12 12 0 0 0 12 24l4.900-9.100a5.700 5.700 0 0 1-9.800 0z" fill="#34a351" />
    <circle cx="12" cy="12" r="5.9" fill="#fff" />
    <circle cx="12" cy="12" r="4.700" fill="#3b7ff0" />
  </svg>
);
const VscodeIcon = () => (
  <svg width="24" height="24" viewBox="0 0 24 24">
    <path d="M17.500 0L24 3v18l-6.500 3z" fill="#2ea3ec" />
    <path d="M17.500 0v7L3 18.500 0 16.500v-1.500z" fill="#0f77bf" />
    <path d="M17.500 24v-7L3 5.500 0 7.500V9z" fill="#1b8fd8" />
  </svg>
);
const SnipIcon = () => (
  <svg width="20" height="24" viewBox="0 0 20 24" fill="none">
    <path d="M3 5C8-1 17 1 17.500 7.500c.3 5-3 8-7 8.500" stroke="#cf4520" strokeWidth="3.600" />
    <path d="M10.500 2v14M13 8.500L8 17" stroke="#cfd3d6" strokeWidth="2.500" />
    <circle cx="4" cy="18.500" r="2.800" stroke="#2e86cf" strokeWidth="2.200" />
    <circle cx="12" cy="20.500" r="2.400" stroke="#2e9fe0" strokeWidth="2.200" />
  </svg>
);
const RarIcon = () => (
  <svg width="24" height="20" viewBox="0 0 24 20">
    <path d="M2 4l3-3h17l1 3v3H3z" fill="#7a3d74" /><path d="M5 5h17v3H5z" fill="#d85bb0" />
    <path d="M2 8h21v5H2z" fill="#1b2f9a" /><path d="M5 10h18v2H5z" fill="#5a86ff" />
    <path d="M2 13h21v6H2z" fill="#0c6b1d" /><path d="M5 15h18v2.500H5z" fill="#3ee04a" />
    <path d="M0 3.500l6 2v3l-6-2zM0 9l6 1v3l-6-1zM0 14l6 1v3.500l-6-1z" fill="#e9e3d0" />
    <path d="M13 1h4v18h-4z" fill="#86552d" /><path d="M13.500 8h4v4.500h-4z" fill="#e4c98a" />
  </svg>
);
const AcrobatIcon = () => (
  <svg width="22" height="20" viewBox="0 0 22 20">
    <rect width="22" height="20" fill="#c20a0a" /><rect x="0.7" y="0.7" width="20.6" height="9" fill="#db1414" />
    <path d="M4.500 16c2-2.500 5.500-6 5.800-11 .2-1.500 1.600-1.300 1.300.5-.8 4 2.500 7.500 6.500 7.200-2-2-8-.5-11 1.300-1.500 1-2.300 2-2.600 2z" fill="none" stroke="#fff" strokeWidth="1.2" />
  </svg>
);
const WordText = styled.text`
  font: 700 15px "Liberation Serif", serif;
  fill: #2459a8;
`;
const WordIcon = () => (
  <svg width="22" height="22" viewBox="0 0 22 22">
    <path d="M1 1.500L20.500.500v20.500H1z" fill="#e8f0fa" stroke="#9fb9dc" />
    <path d="M16 4h4M16 7h4M16 10h4M4 19h9" stroke="#5c8ac8" />
    <path d="M0 3l16-1v15L0 16z" fill="#fff" />
    <WordText x="1" y="15" textLength="15">W</WordText>
    <path d="M14 14l7-2v9l-7 .5z" fill="#fff" />
  </svg>
);
const PhotosIcon = () => (
  <svg width="22" height="22" viewBox="0 0 22 22">
    <rect width="22" height="22" fill="#38a0e8" />
    <path d="M11 11l4-2.500 7 6V22H11z" fill="#5b86d8" />
    <path d="M0 13l6.500-6.500L20 22H0z" fill="#17437c" />
    <circle cx="15" cy="5" r="2" fill="#fff" />
  </svg>
);

type TaskEntry = { icon: React.ReactNode; state?: "open" | "multi" | "active" };
const tasks: TaskEntry[] = [
  { icon: <EdgeIcon /> },
  { icon: <FolderIcon />, state: "multi" },
  { icon: <FirefoxIcon />, state: "multi" },
  { icon: <MysqlIcon /> },
  { icon: <ChromeIcon />, state: "open" },
  { icon: <TableauMark size={23} />, state: "active" },
  { icon: <VscodeIcon /> },
  { icon: <SnipIcon />, state: "multi" },
  { icon: <RarIcon />, state: "open" },
  { icon: <AcrobatIcon />, state: "multi" },
  { icon: <WordIcon />, state: "open" },
  { icon: <PhotosIcon />, state: "open" },
];

const menu: [string, number][] = [
  ["File", 34], ["Data", 40], ["Worksheet", 72], ["Dashboard", 73], ["Story", 43], ["Analysis", 59],
  ["Map", 40], ["Format", 54], ["Server", 48], ["Window", 60], ["Help", 40],
];
const measures = [
  "Cement Co2", "Cement Co2 Per Capita", "Co2", "Co2 Growth Prct", "Co2 Per Capita", "Coal Co2", "Coal Co2 Per Capita",
  "Cumulative Co2", "Flaring Co2", "Flaring Co2 Per Capita", "Gas Co2", "Gas Co2 Per Capita", "Oil Co2",
  "Oil Co2 Per Capita", "Other Co2 Per Capita", "Other Industry Co2", "Population",
];

export default function App() {
  return (
    <>
      <GlobalStyle />
      <Screen>
        <TitleBar>
          <TableauMark size={15} />
          <TitleText>Tableau - Book1 sheet dash story [Recovered] - Tableau license expires in 12 days</TitleText>
          <WindowButtons>
            <Icon w={10} h={12} color="#000" sw={1}><path d="M1 6.500h10" /></Icon>
            <Icon w={10} h={12} color="#000" sw={1}><path d="M.5 3.500h7v7h-7zM2.500 3.500v-2h7v7h-2" /></Icon>
            <Icon w={12} h={12} color="#000" sw={1.1}><path d="M-2 1l10 10M8 1l-10 10" /></Icon>
          </WindowButtons>
        </TitleBar>
        <MenuBar>
          {menu.map(([label, w]) => <MenuItem key={label} $w={w}>{label}</MenuItem>)}
        </MenuBar>
        <Toolbar><ToolbarIcons /></Toolbar>

        <Body>
          <DataPane>
            <PaneTabs>
              <DataTab>Data</DataTab>
              <AnalyticsTab>
                Analytics
                <Icon w={6} h={10}><path d="M5.500.5L1 5l4.500 4.500" /></Icon>
              </AnalyticsTab>
            </PaneTabs>
            <SourceRow>
              <Icon w={16} h={16}>
                <path d="M4 12.500C2 12 .8 11.300.8 10.500v-8C.8 1.500 2.700.8 5 .8s4 .6 4.400 1.400M.8 3.500C2 4.500 3 4.600 4 4.700" />
                <ellipse cx="9.5" cy="4.6" rx="4.3" ry="1.7" />
                <path d="M5.200 4.600v8.500c.3 1.200 2 1.700 4 1.700M13.800 4.600v3M5.500 8c1.500 1 3 1.200 5 1.200" />
                <circle cx="12.4" cy="12.3" r="3.6" fill="#3c84a3" stroke="none" />
                <path d="M10.800 12.300l1.300 1.300 2.200-2.500" stroke="#fff" />
              </Icon>
              localhost
            </SourceRow>
            <SearchRow>
              <SearchBox>
                Search
                <Icon w={11} h={11}><circle cx="6.5" cy="4.5" r="3.200" /><path d="M4.200 6.800L1.200 9.800" /></Icon>
              </SearchBox>
              <Slot $gap={4}>
                <Icon w={13} h={13}><path d="M.7.700h11.600L8 6.500v5L5 10V6.500z" /></Icon>
              </Slot>
              <Slot $gap={6}>
                <Icon w={1} h={18} color={LINE} sw={1}><path d="M.5 0v18" /></Icon>
              </Slot>
              <Slot $gap={6}>
                <Icon w={12} h={10} sw={1}>
                  <path d="M0 .5h12M0 3.500h12M0 6.500h12M0 9.500h12" strokeDasharray="3 1 2 1 2 1 3" />
                </Icon>
              </Slot>
              <Slot $gap={9}><Caret w={7} /></Slot>
            </SearchRow>
            <PaneHeading $h={22} $line={17}>Tables</PaneHeading>
            <FieldArea>
              <FieldList>
                <FieldRow><FieldIcon><GlobeGlyph /></FieldIcon>country</FieldRow>
                <FieldRow><FieldIcon><HashGlyph /></FieldIcon>Year</FieldRow>
                <FieldRow $italic><AbcIcon>Abc</AbcIcon>Measure Names</FieldRow>
                <FieldRule />
                {measures.map((m) => (
                  <FieldRow key={m}><FieldIcon><HashGlyph /></FieldIcon>{m}</FieldRow>
                ))}
              </FieldList>
              <Scrollbar>
                <ScrollArrow><Icon w={8} h={5} color="#505050" sw={2}><path d="M.5 4.500L4 1l3.500 3.500" /></Icon></ScrollArrow>
                <ScrollThumb />
                <ScrollArrow><Icon w={8} h={5} color="#505050" sw={2}><path d="M.5.500L4 4 7.500.500" /></Icon></ScrollArrow>
              </Scrollbar>
            </FieldArea>
            <PaneHeading $h={25} $line={23}>Parameters</PaneHeading>
            <FieldRow><FieldIcon><HashGlyph /></FieldIcon>top</FieldRow>
          </DataPane>

          <CardColumn>
            <Card $h={62}><CardTitle>Pages</CardTitle></Card>
            <Card $h={78}>
              <CardTitle>Filters</CardTitle>
              <FilterPill $w={144} $tone={BLUE} $ls={-0.1}>country</FilterPill>
            </Card>
            <Card $h={314}>
              <CardTitle>Marks</CardTitle>
              <MarkLayer $bold><PieGlyph />All</MarkLayer>
              <MarkBody>
                <MarkSelect>
                  <PieGlyph size={10} />Pie
                  <SelectArrow $w={19}><Caret w={7} /></SelectArrow>
                </MarkSelect>
                <MarkGrid>
                  <MarkButton><Icon w={15} h={20}><g transform="translate(0 3)"><ColorDots /></g></Icon>Color</MarkButton>
                  <MarkButton>
                    <Icon w={15} h={20}><circle cx="9" cy="9" r="5.300" /><circle cx="3.700" cy="13.300" r="2.900" fill="#fafafa" /></Icon>Size
                  </MarkButton>
                  <MarkButton><Icon w={13} h={20}><g transform="translate(0 4)"><BoxedT /></g></Icon>Label</MarkButton>
                  <MarkButton>
                    <Icon w={14} h={20} sw={1.1}>
                      <circle cx="7" cy="7.5" r="2" fill={INK} stroke="none" />
                      <circle cx="1.9" cy="13.5" r="1.600" /><circle cx="7" cy="13.5" r="1.600" /><circle cx="12.1" cy="13.5" r="1.600" />
                    </Icon>Detail
                  </MarkButton>
                  <MarkButton>
                    <Icon w={14} h={20}><path d="M.6 4.600h12.800v9H11v3.400l-3.500-3.400H.6z" /></Icon>Tooltip
                  </MarkButton>
                  <MarkButton>
                    <Icon w={12} h={20}><path d="M1.400 15L3.600 4.200Q8.500 5.500 10.800 9.800z" /></Icon>Angle
                  </MarkButton>
                </MarkGrid>
                <MarkPills>
                  <MarkPillRow><BoxedT /><Pill $w={111} $tone={GREEN} $ls={0.2}>SUM(Coal Co2)</Pill></MarkPillRow>
                  <MarkPillRow><BoxedT /><Pill $w={111} $tone="#d3d3d3" $dark $ls={-0.2}>Multiple fields</Pill></MarkPillRow>
                  <MarkPillRow><ColorDots dim /><Pill $w={109} $tone="#d3d3d3" $dark $ls={-0.2}>Multiple fields</Pill></MarkPillRow>
                  <Stepper>
                    <Step $off><Icon w={7} h={4}><path d="M0 4h7L3.500 0z" fill="#777" stroke="none" /></Icon></Step>
                    <Step><Caret w={7} color="#46566b" /></Step>
                  </Stepper>
                </MarkPills>
              </MarkBody>
              <MarkLayer><PieGlyph />AGG(Avg(0.0))</MarkLayer>
              <MarkLayer><PieGlyph />AGG(Avg(0.0))</MarkLayer>
            </Card>
          </CardColumn>

          <Sheet>
            <Shelf>
              <ShelfName>
                <Icon w={12} h={12} sw={2.2}><path d="M2 0v2M2 3.500V12M6 0v2M6 3.500V12M10 0v2M10 3.500V12" /></Icon>
                Columns
              </ShelfName>
              <ShelfPills>
                <Pill $w={148} $tone={GREEN} $side="left" $ls={0.5}>AGG(Avg(0.0))</Pill>
                <Pill $w={148} $tone={GREEN} $side="right" $ls={0.5}>AGG(Avg(0.0))</Pill>
              </ShelfPills>
            </Shelf>
            <Shelf>
              <ShelfName>
                <Icon w={12} h={10} sw={2}><path d="M0 1h2M3.500 1H12M0 5h2M3.500 5H12M0 9h2M3.500 9H12" /></Icon>
                Rows
              </ShelfName>
            </Shelf>
            <Canvas><Chart /></Canvas>
          </Sheet>
        </Body>

        <SheetTabs>
          <SourceTab $w={131} $pad={9}>
            <Icon w={10} h={12}>
              <ellipse cx="5" cy="2.4" rx="3.9" ry="1.7" /><path d="M1.100 2.400v7c0 1 1.700 1.800 3.900 1.800s3.900-.8 3.900-1.800v-7" />
            </Icon>
            Data Source
          </SourceTab>
          <SheetTab $w={17} $pad={-0}>a</SheetTab>
          <SheetTab $w={180} $pad={8}>co2 emission by other factor</SheetTab>
          <SheetTab $w={147}>emission rate over year</SheetTab>
          <SheetTab $w={131} $active>dount chart coal co2</SheetTab>
          <SheetTab $w={170}>dount chart for cement co2</SheetTab>
          <SheetTab $w={147}>dount chart for gas co2</SheetTab>
          <SheetTab $w={200}>dount chart for faring co2 emissi...</SheetTab>
          <SheetTab $w={147}>dount chart for oil co2 em</SheetTab>
          <AddTab>
            <Icon w={16} h={16}><path d="M12 7V1.500H.8v10h6.500M3.500 9.500V7M6.300 9.500V4M9.200 7V5" /><path d="M7.500 11.500h8M11.500 7.500v8" strokeWidth="2" /></Icon>
          </AddTab>
          <AddTab>
            <Icon w={16} h={16}><path d="M11 6.500V1.500H.8v10h6.500M.8 6.500H11M5.800 1.500v10" /><path d="M7.500 11.500h8M11.500 7.500v8" strokeWidth="2" /></Icon>
          </AddTab>
          <AddTab>
            <Icon w={16} h={16}><path d="M6.300 3L1 1v9.500l5.300 2V3L11.500 1v6M6.300 12.500l1-.4" /><path d="M7.500 11.500h8M11.500 7.500v8" strokeWidth="2" /></Icon>
          </AddTab>
        </SheetTabs>

        <StatusBar>
          <StatusText $w={58}>5 marks</StatusText>
          <StatusText $w={106}>1 row by 1 column</StatusText>
          <StatusText $w={832} $ls={0.08}>SUM of AGG(Avg(0.0)): 0</StatusText>
          <StatusCell $w={127} />
          <StatusCell $w={27} />
          <StatusCell $w={27} />
          <StatusCell $w={47} />
          <StatusCell $w={71}>
            <svg width="70" height="8" viewBox="0 0 70 8" fill="#555">
              <path d="M8 .5h1.300v7H8zM14 .500v7L9.500 4zM29 .500v7L24.500 4zM41 .500v7L45.500 4zM56 .500v7L60.500 4zM60.500.500h1.300v7h-1.300z" />
            </svg>
          </StatusCell>
          <StatusCell $w={67}>
            <svg width="66" height="12" viewBox="0 0 66 12">
              <path d="M8 .5h3v3H8zM12 .5h3v3h-3zM16 .5h3v3h-3zM8 4.500h3v3H8zM12 4.500h3v3h-3zM16 4.500h3v3h-3zM8 8.500h3v3H8zM12 8.500h3v3h-3zM16 8.500h3v3h-3zM29 .500h11v6.500H29zM29 8.500h3v3h-3zM33 8.500h3v3h-3zM37 8.500h3v3h-3z" fill="#bbb" />
              <rect x="50" y="0.5" width="11" height="11" fill="#666" />
            </svg>
          </StatusCell>
        </StatusBar>

        <Taskbar>
          <StartButton>
            <svg width="16" height="16" viewBox="0 0 16 16" fill="#fff">
              <path d="M0 2.300l6.500-.9v6.200H0zM7.300 1.300L16 0v7.600H7.300zM0 8.400h6.500v6.200L0 13.700zM7.300 8.400H16V16l-8.700-1.300z" />
            </svg>
          </StartButton>
          <TaskSearch>
            <Icon w={22} h={22} color="#000" sw={2.8}><circle cx="11" cy="11" r="9" /></Icon>
            <TaskSearchText>Type here to search</TaskSearchText>
            <Icon w={12} h={17} color="#222"><rect x="3.200" y="0.700" width="5.600" height="10.500" /><path d="M.7 8v5.300h10.600V8M6 13.500v2.700M3 16.400h6" /></Icon>
          </TaskSearch>
          <TaskItem>
            <Icon w={17} h={16} color="#fff">
              <path d="M1 .5v2.500h10V.500M1 15.500V13h10v2.500M1 5.200h10v5.500H1zM15 .500V4M15 9v6.500" /><path d="M15 5v3" strokeWidth="3" />
            </Icon>
          </TaskItem>
          <TaskItems>
            {tasks.map((t, i) => <TaskItem key={i} $state={t.state}>{t.icon}</TaskItem>)}
          </TaskItems>
          <Tray>
            <Icon w={16} h={16} color="#fff">
              <circle cx="10.5" cy="3.8" r="3" /><path d="M15.500 11c-.5-2.500-2.500-4-5-4M8 7.500L7 9" /><circle cx="5.500" cy="9.500" r="2.400" /><path d="M1 15.500c.3-2.300 2-3.500 4.500-3.500s4 1.500 4.300 3.500" />
            </Icon>
            <Slot $gap={22}><Icon w={12} h={7} color="#fff"><path d="M.5 6.500L6 1l5.500 5.500" /></Icon></Slot>
            <Slot $gap={10}>
              <Icon w={16} h={14} color="#fff" sw={1.1}><path d="M.6 5v4.500h2.200L6.500 13V1.500L2.800 5zM8.500 5c1 1.200 1 3.300 0 4.500M10.800 3.300c2 2.200 2 5.700 0 8M13 1.500c3 3.200 3 8.300 0 11.500" /></Icon>
            </Slot>
            <Slot $gap={9}>
              <Icon w={16} h={10} color="#fff"><path d="M.6 1h12.800v8H.6zM13.400 3.500h1.600v3h-1.600" /><path d="M2.200 2.500h3.300v5H2.200z" fill="#fff" stroke="none" /></Icon>
            </Slot>
            <TrayText $gap={9} $w={24}>ENG</TrayText>
            <TrayText $gap={9} $w={64}>17:56<br />15-04-2023</TrayText>
            <Slot $gap={15}>
              <Icon w={16} h={16} color="#fff"><path d="M.6 1h14.800v10.500H11L8 14.500l-3-3H.6z" /></Icon>
            </Slot>
            <DesktopPeek />
          </Tray>
        </Taskbar>

        <ShowMe>
          <ShowMeTab>
            <svg width="14" height="15" viewBox="0 0 14 15">
              <path d="M0 0h11v3H0z" fill="#856d93" /><path d="M0 4h14v3H0z" fill="#7ba2cc" />
              <path d="M0 8h5v3H0z" fill="#f4a77a" /><path d="M0 12h8v3H0z" fill="#f7707f" />
            </svg>
            Show Me
          </ShowMeTab>
          <ShowMePanel>
            <ThumbGrid>
              {thumbs.map((t, i) => (
                <Thumb key={i} $on={i === 6}>
                  <svg width="56" height="42" viewBox="0 0 168 126">{t}</svg>
                </Thumb>
              ))}
            </ThumbGrid>
            <Hints>
              <Hint><span>For <b>horizontal bars</b> try</span></Hint>
              <Hint $ls={-0.1}>0 or more<HintPill $w={90} $tone={BLUE}>Dimensions</HintPill></Hint>
              <Hint $ls={-0.45}>1 or more<HintPill $w={79} $tone={GREEN}>Measures</HintPill></Hint>
            </Hints>
          </ShowMePanel>
        </ShowMe>
        <WindowEdge />
      </Screen>
    </>
  );
}
